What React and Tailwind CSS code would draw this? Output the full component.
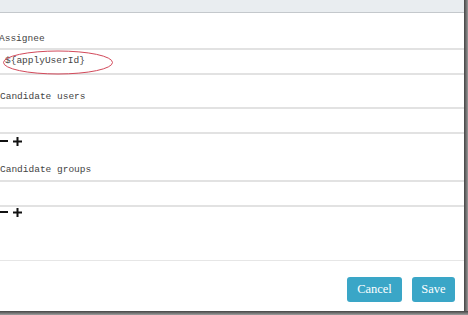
import React from "react";

const mono = { fontFamily: '"Liberation Mono", "DejaVu Sans Mono", monospace' };

function Field({ children }) {
  return (
    <div className="relative h-[27px] border-y-2 border-[#e2e2e2] bg-white flex items-center">
      {children}
    </div>
  );
}

function AddRemove() {
  return (
    <div className="flex items-center gap-[5px] h-[10px]">
      <svg width="8" height="8" viewBox="0 0 8 8">
        <rect x="0" y="3" width="8" height="2" fill="#111" />
      </svg>
      <svg width="9" height="9" viewBox="0 0 9 9">
        <rect x="0" y="3.5" width="9" height="2" fill="#111" />
        <rect x="3.5" y="0" width="2" height="9" fill="#111" />
      </svg>
    </div>
  );
}

export default function App() {
  return (
    <div className="w-[468px] h-[315px] bg-white flex flex-col overflow-hidden">
      <div className="flex flex-1 min-h-0">
        <div className="w-[464px] flex flex-col text-[9.5px] text-[#444]" style={mono}>
          {/* header strip */}
          <div className="h-[13px] shrink-0 bg-[#e9edf0] border-b border-[#c4c8cc]" />

          {/* Assignee */}
          <div className="mt-[20px] h-[12px] leading-[12px] -ml-[1px]">Assignee</div>
          <div className="mt-[3px]">
            <Field>
              <span className="ml-[5px]">${"{"}applyUserId{"}"}</span>
              <svg className="absolute left-[2px] top-[0px]" width="112" height="25" viewBox="0 0 112 25">
                <ellipse cx="56" cy="12.5" rx="54.5" ry="11.5" fill="none" stroke="#d2495a" strokeWidth="1" />
              </svg>
            </Field>
          </div>

          {/* Candidate users */}
          <div className="mt-[16px] h-[12px] leading-[12px]">Candidate users</div>
          <div className="mt-[4px]">
            <Field />
          </div>
          <div className="mt-[2px]">
            <AddRemove />
          </div>

          {/* Candidate groups */}
          <div className="mt-[18px] h-[12px] leading-[12px]">Candidate groups</div>
          <div className="mt-[4px]">
            <Field />
          </div>
          <div className="mt-[0px]">
            <AddRemove />
          </div>

          {/* footer */}
          <div className="mt-[43px] border-t border-[#e6e6e6]" />
          <div className="flex justify-end gap-[10px] pr-[9px] mt-[16px]" style={{ fontFamily: '"Liberation Serif", serif' }}>
            <button className="w-[55px] h-[25px] rounded-[3px] bg-[#3aa6c7] text-white text-[12.5px]">Cancel</button>
            <button className="w-[43px] h-[25px] rounded-[3px] bg-[#3aa6c7] text-white text-[12.5px]">Save</button>
          </div>
        </div>
        <div className="w-[4px] bg-gradient-to-r from-[#444] to-[#999]" />
      </div>
      <div className="h-[4px] shrink-0 bg-gradient-to-b from-[#444] to-[#a0a0a0]" />
    </div>
  );
}
